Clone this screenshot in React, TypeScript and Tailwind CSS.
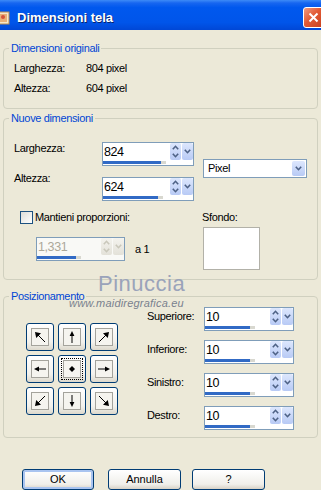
import React from 'react';

const Chevron = ({ dir, color = '#4D6185' }: { dir: 'up' | 'down'; color?: string }) => (
  <svg width="7" height="5" viewBox="0 0 7 5">
    <path
      d={dir === 'up' ? 'M0.8 4.2 L3.5 1.3 L6.2 4.2' : 'M0.8 0.8 L3.5 3.7 L6.2 0.8'}
      fill="none"
      stroke={color}
      strokeWidth="1.6"
    />
  </svg>
);

function Spin({ value, bar, w, disabled }: { value: string; bar: number; w: string; disabled?: boolean }) {
  const btn = disabled
    ? 'bg-[linear-gradient(to_bottom,#F4F3EE,#E3E1D8)]'
    : 'bg-[linear-gradient(to_bottom,#DDE7FD,#B8CAF5)]';
  const arrow = disabled ? '#C9C7BA' : '#4D6185';
  return (
    <div className={`flex h-[24px] flex-col border border-[#7F9DB9] ${disabled ? 'bg-[#F9F9F6]' : 'bg-white'} ${w}`}>
      <div className="flex h-[17px]">
        <div
          className={`flex-1 pl-[1px] text-[12.5px] leading-[19px] tracking-[-0.4px] ${
            disabled ? 'text-[#ACA899]' : 'text-black'
          }`}
        >
          {value}
        </div>
        <div className={`flex w-[11px] flex-col items-center justify-center gap-[3px] rounded-[2px] ${btn}`}>
          <Chevron dir="up" color={arrow} />
          <Chevron dir="down" color={arrow} />
        </div>
        <div className={`ml-[1px] flex w-[11px] items-center justify-center rounded-[2px] ${btn}`}>
          <Chevron dir="down" color={arrow} />
        </div>
      </div>
      <div className="mt-[1px] flex h-[3px]">
        <div className="h-[3px] bg-[#316AC5]" style={{ width: bar }} />
        <div className="h-[3px] w-[5px] bg-[#D8D8D0]" />
      </div>
    </div>
  );
}

const arrows: Record<string, { line: string; head: string }> = {
  nw: { line: 'M13 13 L5 5', head: '3,3 9,4.2 4.2,9' },
  n: { line: 'M8 14 V5', head: '8,2 5.6,7 10.4,7' },
  ne: { line: 'M3 13 L11 5', head: '13,3 7,4.2 11.8,9' },
  w: { line: 'M14 8 H5', head: '2,8 7,5.6 7,10.4' },
  e: { line: 'M2 8 H11', head: '14,8 9,5.6 9,10.4' },
  sw: { line: 'M13 3 L5 11', head: '3,13 4.2,7 9,11.8' },
  s: { line: 'M8 2 V11', head: '8,14 5.6,9 10.4,9' },
  se: { line: 'M3 3 L11 11', head: '13,13 7,11.8 11.8,7' },
};

function PosButton({ dir }: { dir: string }) {
  const center = dir === 'c';
  const inner = (
    <div className="flex h-[18px] w-[18px] items-center justify-center border border-[#A4A39C] bg-[#F5F4EF]">
      <svg width="16" height="16" viewBox="0 0 16 16">
        {center ? (
          <polygon points="8,5 11,8 8,11 5,8" fill="#000" />
        ) : (
          <>
            <path d={arrows[dir].line} stroke="#000" strokeWidth="1" fill="none" />
            <polygon points={arrows[dir].head} fill="#000" />
          </>
        )}
      </svg>
    </div>
  );
  return (
    <div className="flex h-[28px] w-[28px] items-center justify-center rounded-[3px] border border-[#003C74] bg-[linear-gradient(to_bottom,#FFFFFF,#F2F1EC_70%,#DCD8CC)]">
      {center ? (
        <div className="flex h-[22px] w-[22px] items-center justify-center border border-dotted border-black">{inner}</div>
      ) : (
        inner
      )}
    </div>
  );
}

function XPButton({ label, cls, focus }: { label: string; cls: string; focus?: boolean }) {
  return (
    <div
      className={`flex h-[21px] items-center justify-center rounded-[3px] border border-[#003C74] bg-[linear-gradient(to_bottom,#FFFFFF,#F0EFEA_75%,#D8D2C6)] text-[11px] ${cls} ${
        focus ? 'shadow-[inset_0_0_0_2px_#A9C4F0]' : ''
      }`}
    >
      {label}
    </div>
  );
}

export default function App() {
  return (
    <div className="relative h-[490px] w-[321px] overflow-hidden bg-[#ECE9D8] font-['Liberation_Sans',Arial,sans-serif] text-[11px] tracking-[-0.35px] text-black">
      {/* title bar */}
      <div className="flex h-[30px] items-center bg-[linear-gradient(to_bottom,#3D8BF7_0%,#1766F0_10%,#0058EE_25%,#0055EA_75%,#0047D6_100%)] pt-[5px]">
        <svg width="16" height="16" viewBox="0 0 16 16" className="-ml-[6px]">
          <rect x="1" y="2" width="14" height="12" fill="#F6E7C9" stroke="#B98A4E" />
          <rect x="3" y="4" width="10" height="8" fill="#E8B077" />
          <circle cx="9" cy="7" r="2" fill="#D4533A" />
        </svg>
        <div className="ml-[7px] text-[13px] font-bold tracking-normal text-white [text-shadow:1px_1px_0_#0A246A]">
          Dimensioni tela
        </div>
        <div className="-mr-[3px] ml-auto flex h-[21px] w-[21px] items-center justify-center rounded-[3px] border border-white bg-[linear-gradient(135deg,#F09A80,#E25A35_45%,#C8401E)]">
          <svg width="11" height="11" viewBox="0 0 11 11">
            <path d="M1.5 1.5 L9.5 9.5 M9.5 1.5 L1.5 9.5" stroke="#fff" strokeWidth="2" />
          </svg>
        </div>
      </div>

      {/* Dimensioni originali */}
      <fieldset className="mx-[3px] mt-[12px] rounded-[4px] border border-[#D0D0BF]">
        <legend className="ml-[5px] px-[2px] leading-[13px] text-[#0046D5]">Dimensioni originali</legend>
        <div className="pb-[10px] pl-[10px] pt-[3px]">
          <div className="flex h-[20px] items-center">
            <span className="w-[72px]">Larghezza:</span>
            <span>804 pixel</span>
          </div>
          <div className="flex h-[20px] items-center">
            <span className="w-[72px]">Altezza:</span>
            <span>604 pixel</span>
          </div>
        </div>
      </fieldset>

      {/* Nuove dimensioni */}
      <fieldset className="mx-[3px] mt-[3px] rounded-[4px] border border-[#D0D0BF]">
        <legend className="ml-[5px] px-[2px] leading-[13px] text-[#0046D5]">Nuove dimensioni</legend>
        <div className="flex pl-[10px] pt-[17px]">
          <div className="flex flex-col gap-[11px]">
            <div className="flex items-start">
              <span className="w-[88px] leading-[13px]">Larghezza:</span>
              <Spin value="824" bar={58} w="w-[92px]" />
            </div>
            <div className="flex items-start">
              <span className="-mt-[5px] w-[88px] leading-[13px]">Altezza:</span>
              <Spin value="624" bar={55} w="w-[92px]" />
            </div>
          </div>
          <div className="ml-[9px] mt-[17px] flex h-[19px] w-[104px] items-center border border-[#7F9DB9] bg-white">
            <span className="flex-1 pl-[4px]">Pixel</span>
            <div className="mr-[1px] flex h-[15px] w-[13px] items-center justify-center rounded-[2px] bg-[linear-gradient(to_bottom,#DDE7FD,#B8CAF5)]">
              <Chevron dir="down" />
            </div>
          </div>
        </div>
        <div className="flex pb-[9px] pt-[10px]">
          <div className="w-[198px] pl-[16px]">
            <div className="flex h-[13px] items-center">
              <div className="h-[13px] w-[13px] border border-[#1C5180] bg-[linear-gradient(135deg,#DCDCD7,#FFFFFF)]" />
              <span className="ml-[2px]">Mantieni proporzioni:</span>
            </div>
            <div className="ml-[16px] mt-[13px] flex items-center">
              <Spin value="1,331" bar={39} w="w-[89px]" disabled />
              <span className="ml-[10px]">a 1</span>
            </div>
          </div>
          <div>
            <div className="leading-[13px]">Sfondo:</div>
            <div className="ml-[1px] mt-[3px] h-[43px] w-[57px] border border-[#B2B1A8] bg-white" />
          </div>
        </div>
      </fieldset>

      {/* Posizionamento */}
      <fieldset className="mx-[3px] mt-[10px] rounded-[4px] border border-[#D0D0BF]">
        <legend className="ml-[5px] px-[2px] leading-[13px] text-[#0046D5]">Posizionamento</legend>
        <div className="flex items-center pb-[7px] pt-[4px]">
          <div className="ml-[22px] grid grid-cols-3 gap-[4px]">
            {['nw', 'n', 'ne', 'w', 'c', 'e', 'sw', 's', 'se'].map((d) => (
              <PosButton key={d} dir={d} />
            ))}
          </div>
          <div className="ml-[29px] flex flex-col gap-[9px]">
            {['Superiore:', 'Inferiore:', 'Sinistro:', 'Destro:'].map((l) => (
              <div key={l} className="flex items-start">
                <span className="mt-[3px] w-[57px] leading-[13px]">{l}</span>
                <Spin value="10" bar={45} w="w-[90px]" />
              </div>
            ))}
          </div>
        </div>
      </fieldset>

      {/* buttons */}
      <div className="mt-[31px] flex tracking-normal">
        <XPButton label="OK" cls="ml-[22px] w-[72px]" focus />
        <XPButton label="Annulla" cls="ml-[14px] w-[73px]" />
        <XPButton label="?" cls="ml-[11px] w-[73px]" />
      </div>

      {/* watermark */}
      <div className="absolute left-[98px] top-[272px] text-[22px] leading-[24px] tracking-[0.5px] text-[#9AA3BA]">
        Pinuccia
      </div>
      <div className="absolute left-[69px] top-[297px] text-[11px] italic leading-[12px] tracking-[0.2px] text-[#79818E]">
        www.maidiregrafica.eu
      </div>
    </div>
  );
}
